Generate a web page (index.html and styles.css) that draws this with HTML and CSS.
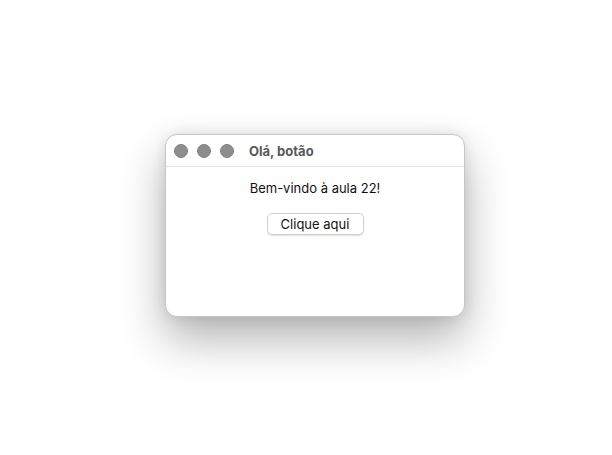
FILE: index.html
```html
<!DOCTYPE html>
<html lang="pt">

<head>
    <meta charset="UTF-8">
    <title>Olá, botão</title>
    <link rel="stylesheet" href="styles.css">
</head>

<body>
    <div class="window">
        <div class="titleBar">
            <div class="lights">
                <span class="light"></span>
                <span class="light"></span>
                <span class="light"></span>
            </div>
            <div class="title">Olá, botão</div>
        </div>
        <div class="content">
            <p class="message">Bem-vindo à aula 22!</p>
            <button class="btn">Clique aqui</button>
        </div>
    </div>
</body>

</html>
```

FILE: styles.css
```css
* {
    box-sizing: border-box;
    margin: 0;
    padding: 0;
    font-family: 'Inter', 'Liberation Sans', sans-serif;
}

body {
    background-color: #ffffff;
    width: 612px;
    height: 455px;
    padding: 134px 0 0 165px;
    overflow: hidden;
}

.window {
    width: 300px;
    height: 183px;
    background-color: #ffffff;
    border-radius: 12px;
    border: 1px solid #c6c6c6;
    box-shadow: 0 22px 45px rgba(0, 0, 0, 0.3), 0 0 14px rgba(0, 0, 0, 0.1);
    overflow: hidden;
}

.titleBar {
    height: 32px;
    display: flex;
    align-items: center;
    padding-left: 8px;
    border-bottom: 1px solid #e4e4e4;
}

.lights {
    display: flex;
    gap: 9px;
}

.light {
    width: 14px;
    height: 14px;
    border-radius: 50%;
    background-color: #8d8d8d;
    border: 1px solid #808080;
}

.title {
    margin-left: 15px;
    font-size: 13px;
    font-weight: 700;
    color: #595959;
}

.content {
    display: flex;
    flex-direction: column;
    align-items: center;
    padding-top: 13px;
}

.message {
    font-size: 13px;
    color: #111111;
    line-height: 16px;
}

.btn {
    margin-top: 17px;
    width: 97px;
    height: 22px;
    font-size: 13px;
    color: #111111;
    background-color: #ffffff;
    border: 1px solid #d0d0d0;
    border-radius: 5px;
    box-shadow: 0 1px 1px rgba(0, 0, 0, 0.12);
}
```
